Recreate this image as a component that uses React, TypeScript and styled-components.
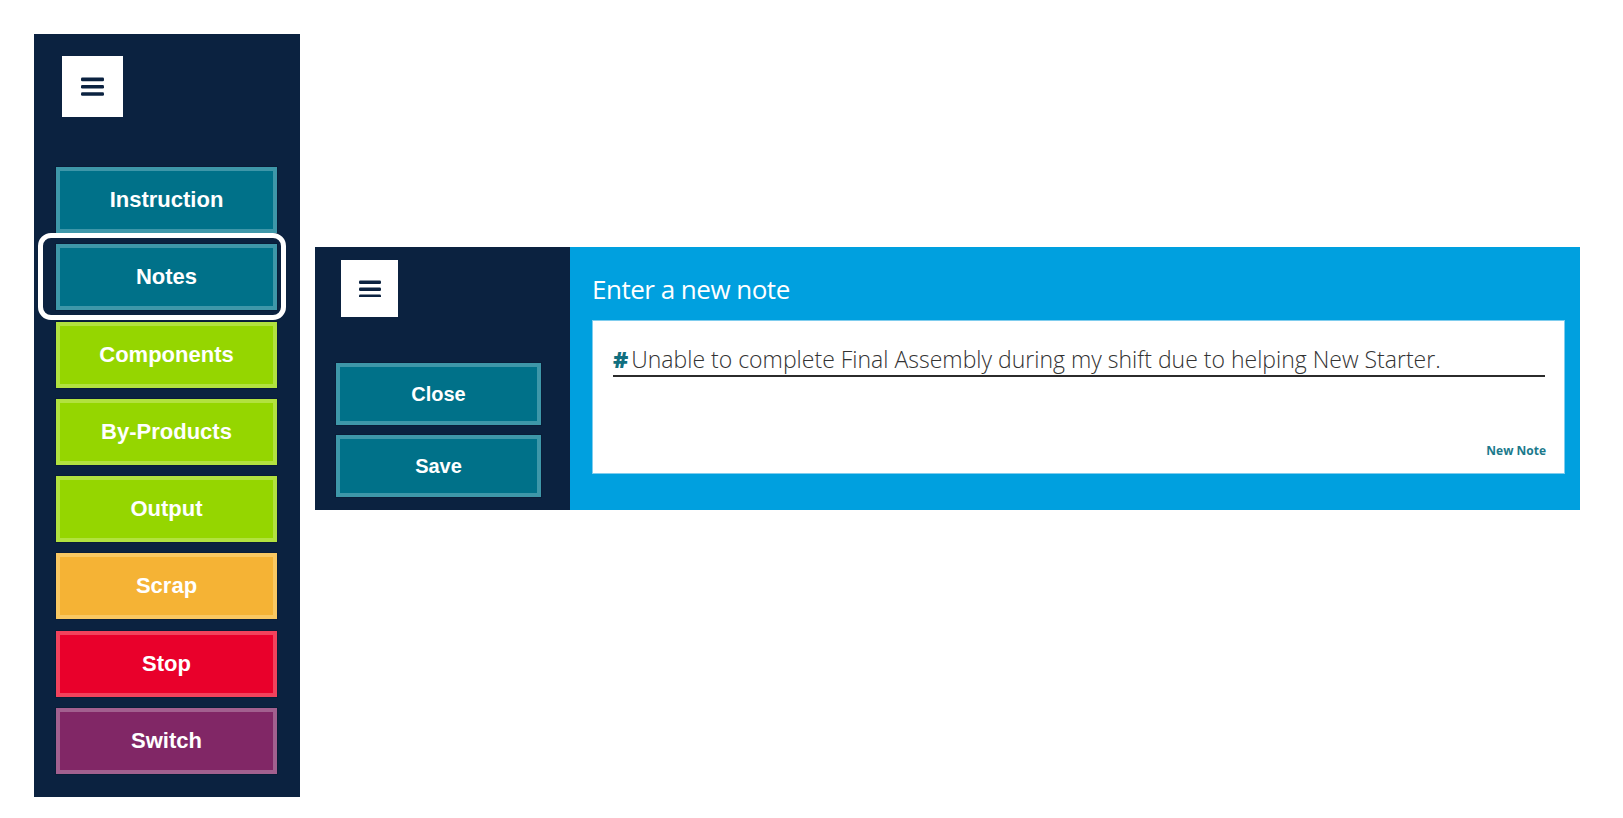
import React from "react";
import styled, { createGlobalStyle, css } from "styled-components";

const GlobalStyle = createGlobalStyle`
  html, body { margin: 0; padding: 0; background: #ffffff; }
  * { box-sizing: border-box; }
`;

const NAVY = "#0b2240";

type Tone = "teal" | "green" | "orange" | "red" | "purple";

const tones: Record<Tone, { fill: string; edge: string }> = {
  teal: { fill: "#007189", edge: "#3e97a9" },
  green: { fill: "#95d600", edge: "#b2e23f" },
  orange: { fill: "#f5b335", edge: "#f9c862" },
  red: { fill: "#e9002b", edge: "#f2425c" },
  purple: { fill: "#812766", edge: "#a2608f" },
};

const Page = styled.div`
  display: flex;
  align-items: flex-start;
  gap: 15px;
  padding: 34px 0 0 34px;
`;

const Sidebar = styled.nav`
  width: 266px;
  height: 763px;
  flex-shrink: 0;
  background: ${NAVY};
  padding: 22px 0 0 22px;
  display: flex;
  flex-direction: column;
`;

const MenuBox = styled.button<{ $size: number; $offset: number }>`
  width: ${(p) => p.$size}px;
  height: ${(p) => p.$size}px;
  margin-left: ${(p) => p.$offset}px;
  background: #ffffff;
  border: none;
  padding: 0;
  display: flex;
  align-items: center;
  justify-content: center;
  flex-shrink: 0;
`;

const NavList = styled.div<{ $top: number; $gap: number }>`
  display: flex;
  flex-direction: column;
  gap: ${(p) => p.$gap}px;
  margin-top: ${(p) => p.$top}px;
`;

const ActionButton = styled.button<{
  $tone: Tone;
  $width: number;
  $height: number;
  $font: number;
  $focused?: boolean;
}>`
  position: relative;
  width: ${(p) => p.$width}px;
  height: ${(p) => p.$height}px;
  background: ${(p) => tones[p.$tone].fill};
  border: 4px solid ${(p) => tones[p.$tone].edge};
  box-shadow: 0 0 0 1px rgba(0, 0, 0, 0.12);
  color: #ffffff;
  font-family: "Liberation Sans", Arial, sans-serif;
  font-weight: 700;
  font-size: ${(p) => p.$font}px;
  display: flex;
  align-items: center;
  justify-content: center;
  padding: 0;
  cursor: pointer;
  ${(p) =>
    p.$focused &&
    css`
      &::after {
        content: "";
        position: absolute;
        top: -15px;
        bottom: -14px;
        left: -22px;
        right: -13px;
        border: 5px solid #ffffff;
        border-radius: 13px;
        pointer-events: none;
      }
    `}
`;

const Panel = styled.section`
  display: flex;
  width: 1265px;
  height: 263px;
  flex-shrink: 0;
  margin-top: 213px;
`;

const PanelSide = styled.div`
  width: 255px;
  background: ${NAVY};
  padding: 13px 0 0 21px;
  display: flex;
  flex-direction: column;
`;

const PanelMain = styled.div`
  flex: 1;
  background: #00a0df;
  padding: 27px 15px 36px 22px;
  display: flex;
  flex-direction: column;
`;

const Title = styled.h2`
  margin: 0 0 16px 0;
  color: #ffffff;
  font-family: "Open Sans", "Noto Sans", sans-serif;
  font-weight: 400;
  font-size: 26px;
  line-height: 30px;
  letter-spacing: -0.5px;
`;

const Card = styled.div`
  flex: 1;
  background: #ffffff;
  border: 1px solid #7fcdee;
  padding: 0 19px 14px 20px;
  display: flex;
  flex-direction: column;
`;

const NoteLine = styled.div`
  margin-top: 23px;
  padding-bottom: 1px;
  border-bottom: 2px solid #2b2b2b;
  font-family: "Open Sans", "Noto Sans", sans-serif;
  font-weight: 300;
  font-size: 23px;
  line-height: 30px;
  color: #333333;
  white-space: nowrap;
`;

const Hash = styled.span`
  color: #116f80;
  font-weight: 800;
  margin-right: 3px;
`;

const NewNote = styled.button`
  margin-top: auto;
  align-self: flex-end;
  background: none;
  border: none;
  padding: 0;
  color: #1b7a8c;
  font-family: "Open Sans", "Noto Sans", sans-serif;
  font-weight: 700;
  font-size: 12px;
  line-height: 16px;
  margin-right: -1px;
`;

const Burger = ({ w }: { w: number }) => (
  <svg width={w} height={w * 0.8} viewBox="0 0 23 18.4" aria-hidden>
    <rect x="0" y="0.6" width="23" height="3.6" rx="1.3" fill={NAVY} />
    <rect x="0" y="7.9" width="23" height="3.6" rx="1.3" fill={NAVY} />
    <rect x="0" y="15.2" width="23" height="3.6" rx="1.3" fill={NAVY} />
  </svg>
);

const navItems: { label: string; tone: Tone; focused?: boolean }[] = [
  { label: "Instruction", tone: "teal" },
  { label: "Notes", tone: "teal", focused: true },
  { label: "Components", tone: "green" },
  { label: "By-Products", tone: "green" },
  { label: "Output", tone: "green" },
  { label: "Scrap", tone: "orange" },
  { label: "Stop", tone: "red" },
  { label: "Switch", tone: "purple" },
];

export default function App() {
  return (
    <>
      <GlobalStyle />
      <Page>
        <Sidebar>
          <MenuBox $size={61} $offset={6} aria-label="Menu">
            <Burger w={23} />
          </MenuBox>
          <NavList $top={50} $gap={11.3}>
            {navItems.map((item) => (
              <ActionButton
                key={item.label}
                $tone={item.tone}
                $width={221}
                $height={66}
                $font={22}
                $focused={item.focused}
              >
                {item.label}
              </ActionButton>
            ))}
          </NavList>
        </Sidebar>
        <Panel>
          <PanelSide>
            <MenuBox $size={57} $offset={5} aria-label="Menu">
              <Burger w={22} />
            </MenuBox>
            <NavList $top={46} $gap={10}>
              <ActionButton $tone="teal" $width={205} $height={62} $font={20}>
                Close
              </ActionButton>
              <ActionButton $tone="teal" $width={205} $height={62} $font={20}>
                Save
              </ActionButton>
            </NavList>
          </PanelSide>
          <PanelMain>
            <Title>Enter a new note</Title>
            <Card>
              <NoteLine>
                <Hash>#</Hash>Unable to complete Final Assembly during my shift due to helping New Starter.
              </NoteLine>
              <NewNote>New Note</NewNote>
            </Card>
          </PanelMain>
        </Panel>
      </Page>
    </>
  );
}
